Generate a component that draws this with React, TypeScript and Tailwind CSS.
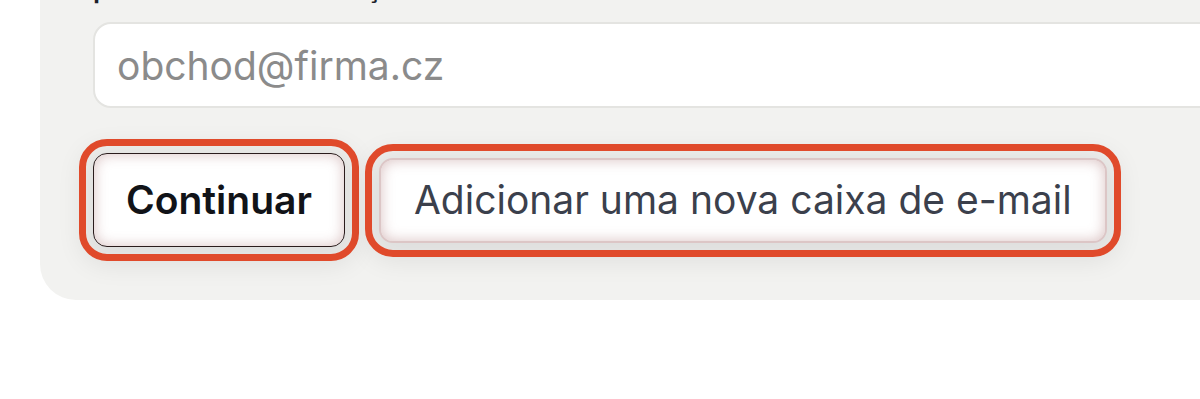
export default function App() {
  return (
    <div className="w-[1200px] h-[399px] overflow-hidden bg-white font-['Inter','Liberation_Sans',sans-serif]">
      {/* Settings panel (cropped) */}
      <div className="ml-[40px] w-[1220px] -mt-[27px] bg-[#f2f2f0] rounded-bl-[36px] pl-[53px] pb-[53px]">
        <label className="block text-[27px] leading-[32px] font-semibold text-[#1c1f2a] whitespace-nowrap">
          para receber notificação
        </label>
        <input
          type="text"
          placeholder="obchod@firma.cz"
          className="mt-[17px] block w-full h-[86px] rounded-[18px] border-2 border-[#e4e4e1] bg-white px-[22px] text-[39px] text-[#222] placeholder:text-[#8b8b8b] outline-none"
        />

        <div className="mt-[45px] flex items-center gap-[34px]">
          <button className="h-[94px] px-[32px] rounded-[14px] border-[1.5px] border-[#2a1c1c] bg-white text-[39px] font-semibold text-[#111318] outline-solid outline-[7px] outline-offset-[7px] outline-[#e04a2b] shadow-[inset_0_0_14px_rgba(160,100,100,0.4),0_6px_26px_12px_rgba(0,0,0,0.08)]">
            Continuar
          </button>
          <button className="h-[85px] px-[33px] rounded-[14px] border-2 border-[#dcc6c6] bg-white text-[39px] text-[#3b404c] whitespace-nowrap outline-solid outline-[7px] outline-offset-[7px] outline-[#e04a2b] shadow-[inset_0_0_14px_rgba(160,100,100,0.4),0_6px_26px_12px_rgba(0,0,0,0.08)]">
            Adicionar uma nova caixa de e-mail
          </button>
        </div>
      </div>
    </div>
  )
}
